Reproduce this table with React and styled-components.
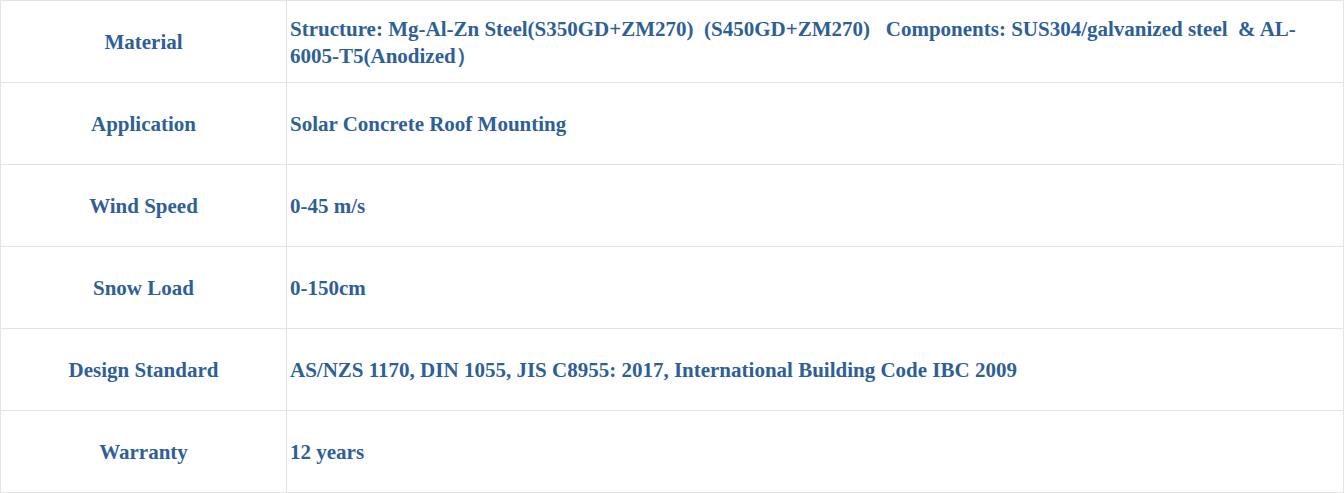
import React from "react";
import styled, { createGlobalStyle } from "styled-components";

const GlobalStyle = createGlobalStyle`
  body {
    margin: 0;
    background: #ffffff;
  }
`;

const SpecTable = styled.table`
  width: 1344px;
  border-collapse: collapse;
  table-layout: fixed;
  font-family: "Liberation Serif", "Times New Roman", serif;
  font-weight: bold;
  font-size: 21px;
  line-height: 27px;
  color: #2e5f96;
`;

const Row = styled.tr`
  height: 82px;
`;

const LabelCell = styled.td`
  width: 285px;
  border: 1px solid #e3e3e3;
  text-align: center;
  vertical-align: middle;
  padding: 2px 0 0;
`;

const ValueCell = styled.td`
  border: 1px solid #e3e3e3;
  text-align: left;
  vertical-align: middle;
  padding: 2px 4px 0 3px;
  white-space: pre-wrap;
`;

const specs = [
  {
    label: "Material",
    value:
      "Structure: Mg-Al-Zn Steel(S350GD+ZM270)  (S450GD+ZM270)   Components: SUS304/galvanized steel  & AL-6005-T5(Anodized\uFF09",
  },
  { label: "Application", value: "Solar Concrete Roof Mounting" },
  { label: "Wind Speed", value: "0-45 m/s" },
  { label: "Snow Load", value: "0-150cm" },
  {
    label: "Design Standard",
    value: "AS/NZS 1170, DIN 1055, JIS C8955: 2017, International Building Code IBC 2009",
  },
  { label: "Warranty", value: "12 years" },
];

export default function App() {
  return (
    <>
      <GlobalStyle />
      <SpecTable>
        <tbody>
          {specs.map((s) => (
            <Row key={s.label}>
              <LabelCell>{s.label}</LabelCell>
              <ValueCell>{s.value}</ValueCell>
            </Row>
          ))}
        </tbody>
      </SpecTable>
    </>
  );
}
